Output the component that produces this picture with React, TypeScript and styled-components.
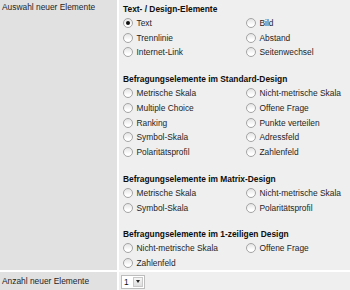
import React from 'react';
import styled, { createGlobalStyle } from 'styled-components';

const GlobalStyle = createGlobalStyle`
  html, body {
    margin: 0;
    padding: 0;
    background: #ffffff;
  }
  body {
    font-family: "Liberation Sans", Arial, sans-serif;
    font-size: 8.4px;
    color: #1e1e1e;
  }
`;

const FormTable = styled.div`
  display: grid;
  grid-template-columns: 117px 1fr;
  grid-template-rows: 270px 18px;
  gap: 2px;
  width: 350px;
  background: #ffffff;
`;

const LabelCell = styled.div<{ $center?: boolean }>`
  background: #e1e1e1;
  padding: ${({ $center }) => ($center ? '0 2px' : '2px 2px 0')};
  display: flex;
  align-items: ${({ $center }) => ($center ? 'center' : 'flex-start')};
  line-height: 10px;
`;

const FieldCell = styled.div<{ $center?: boolean }>`
  background: #efefef;
  padding: ${({ $center }) => ($center ? '1px 0 0 2px' : '2.5px 0 0 4px')};
  display: flex;
  flex-direction: column;
  justify-content: ${({ $center }) => ($center ? 'center' : 'flex-start')};
`;

const Group = styled.div`
  & + & {
    margin-top: 13px;
  }
`;

const GroupTitle = styled.div`
  height: 13px;
  line-height: 13px;
  font-weight: bold;
  color: #0e0e0e;
`;

const OptionGrid = styled.div`
  display: grid;
  grid-template-columns: 123px 1fr;
  grid-auto-rows: 14.75px;
`;

const Option = styled.label`
  display: flex;
  align-items: center;
  gap: 3.5px;
  white-space: nowrap;
`;

const Radio = styled.span<{ $checked?: boolean }>`
  position: relative;
  width: 10px;
  height: 10px;
  box-sizing: border-box;
  border-radius: 50%;
  border: 1px solid #a4a4a4;
  background: linear-gradient(180deg, #e4e4e4 0%, #ffffff 75%);
  flex: none;

  &::after {
    content: '';
    display: ${({ $checked }) => ($checked ? 'block' : 'none')};
    position: absolute;
    left: 2px;
    top: 2px;
    width: 4px;
    height: 4px;
    border-radius: 50%;
    background: #111111;
  }
`;

const Select = styled.div`
  display: flex;
  align-items: stretch;
  width: 24px;
  height: 14px;
  box-sizing: border-box;
  border: 1px solid #bdbdbd;
  background: #ffffff;
`;

const SelectValue = styled.span`
  flex: 1;
  padding-left: 2px;
  line-height: 12px;
  color: #111111;
`;

const SelectButton = styled.span`
  width: 10px;
  margin: 1px;
  background: linear-gradient(180deg, #f6f6f6, #dedede);
  border: 1px solid #c8c8c8;
  box-sizing: border-box;
  display: flex;
  align-items: center;
  justify-content: center;

  &::after {
    content: '';
    border-left: 2.5px solid transparent;
    border-right: 2.5px solid transparent;
    border-top: 3px solid #222222;
  }
`;

type Section = { title: string; items: string[]; checked?: string };

const sections: Section[] = [
  {
    title: 'Text- / Design-Elemente',
    items: ['Text', 'Bild', 'Trennlinie', 'Abstand', 'Internet-Link', 'Seitenwechsel'],
    checked: 'Text',
  },
  {
    title: 'Befragungselemente im Standard-Design',
    items: [
      'Metrische Skala',
      'Nicht-metrische Skala',
      'Multiple Choice',
      'Offene Frage',
      'Ranking',
      'Punkte verteilen',
      'Symbol-Skala',
      'Adressfeld',
      'Polaritätsprofil',
      'Zahlenfeld',
    ],
  },
  {
    title: 'Befragungselemente im Matrix-Design',
    items: ['Metrische Skala', 'Nicht-metrische Skala', 'Symbol-Skala', 'Polaritätsprofil'],
  },
  {
    title: 'Befragungselemente im 1-zeiligen Design',
    items: ['Nicht-metrische Skala', 'Offene Frage', 'Zahlenfeld'],
  },
];

export default function App() {
  return (
    <>
      <GlobalStyle />
      <FormTable>
        <LabelCell>Auswahl neuer Elemente</LabelCell>
        <FieldCell>
          {sections.map((section) => (
            <Group key={section.title}>
              <GroupTitle>{section.title}</GroupTitle>
              <OptionGrid>
                {section.items.map((item) => (
                  <Option key={item}>
                    <Radio $checked={item === section.checked} />
                    {item}
                  </Option>
                ))}
              </OptionGrid>
            </Group>
          ))}
        </FieldCell>
        <LabelCell $center>Anzahl neuer Elemente</LabelCell>
        <FieldCell $center>
          <Select>
            <SelectValue>1</SelectValue>
            <SelectButton />
          </Select>
        </FieldCell>
      </FormTable>
    </>
  );
}
